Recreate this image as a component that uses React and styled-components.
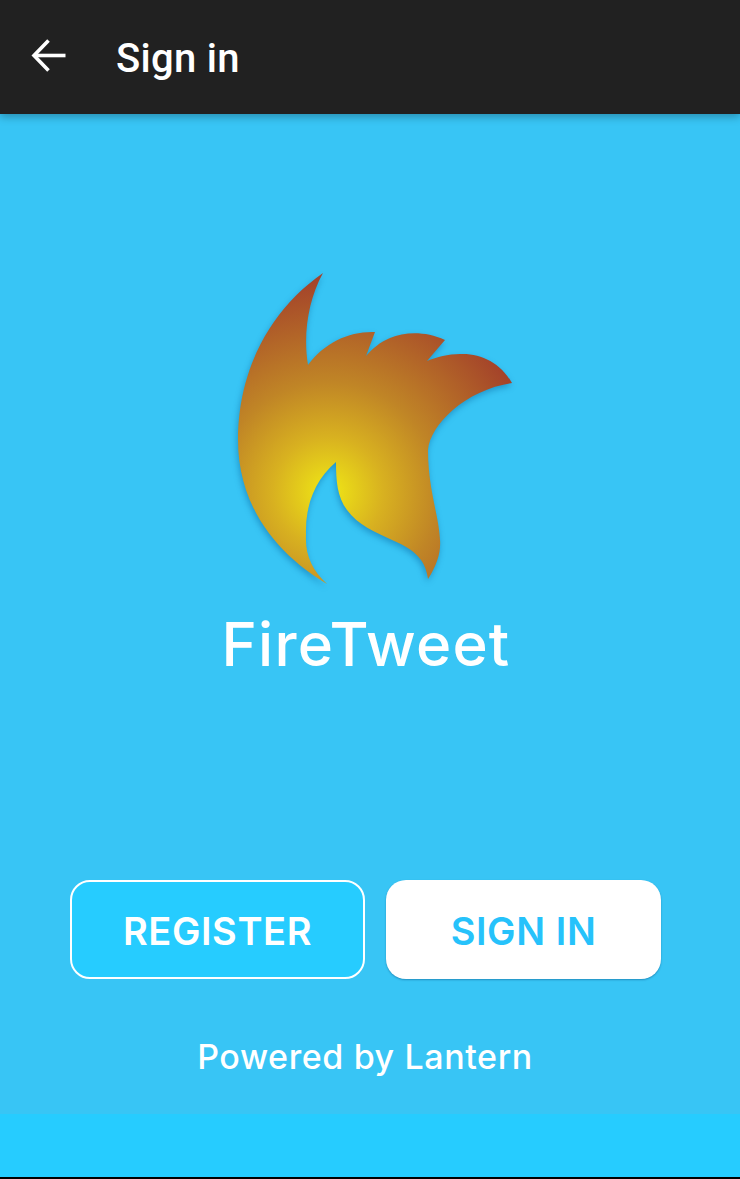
import React from 'react'
import styled, { createGlobalStyle } from 'styled-components'

const GlobalStyle = createGlobalStyle`
  html, body {
    margin: 0;
    padding: 0;
    background: #000;
  }
`

const Page = styled.div`
  width: 740px;
  height: 1179px;
  display: flex;
  flex-direction: column;
  overflow: hidden;
  font-family: "Inter", "Liberation Sans", sans-serif;
  color: #fff;
`

const AppBar = styled.header`
  position: relative;
  z-index: 1;
  flex: 0 0 114px;
  display: flex;
  align-items: center;
  background: #212121;
  box-shadow: 0 3px 8px rgba(0, 0, 0, 0.28);
`

const BackButton = styled.button`
  display: flex;
  width: 116px;
  padding: 0 0 0 28px;
  border: 0;
  background: none;
  color: #fff;
`

const BarTitle = styled.h1`
  margin: 3px 0 0;
  font-family: "Roboto", sans-serif;
  font-size: 40px;
  font-weight: 500;
  line-height: 1;
  letter-spacing: 0.3px;
`

const Main = styled.main`
  flex: 1;
  display: flex;
  flex-direction: column;
  align-items: center;
  padding-right: 10px;
  background: #38c5f5;
`

const Logo = styled.svg`
  display: block;
  margin-top: 151px;
  margin-left: 20px;
  filter: drop-shadow(-1px 3px 3px rgba(0, 80, 140, 0.4));
`

const Brand = styled.div`
  margin-top: 13px;
  margin-left: 2px;
  font-size: 60px;
  font-weight: 500;
  line-height: 72px;
  letter-spacing: 1.2px;
`

const Actions = styled.div`
  display: flex;
  gap: 21px;
  margin-top: 200px;
  margin-left: 1px;
`

const ActionButton = styled.button`
  box-sizing: border-box;
  width: ${props => props.$width}px;
  height: 99px;
  padding: 3px 0 0;
  border: ${props => (props.$filled ? '0' : '2px solid #fff')};
  border-radius: 20px;
  background: ${props => (props.$filled ? '#fff' : '#26ccff')};
  color: ${props => (props.$filled ? '#26c2fb' : '#fff')};
  box-shadow: ${props => (props.$filled ? '0 1px 2px rgba(0, 60, 110, 0.4)' : 'none')};
  font-family: inherit;
  font-size: 38px;
  font-weight: 600;
  letter-spacing: 0.6px;
`

const Powered = styled.div`
  margin-top: 58px;
  font-size: 34px;
  font-weight: 500;
  line-height: 40px;
  letter-spacing: 0.6px;
`

const BottomStrip = styled.div`
  flex: 0 0 63px;
  background: #26ccff;
`

const BottomEdge = styled.div`
  flex: 0 0 2px;
  background: #000;
`

function BackArrow() {
  return (
    <svg width="40" height="40" viewBox="0 0 40 40" fill="none" stroke="#fff" strokeWidth="3.6">
      <path d="M37.5 18.5H7" />
      <path d="M20.5 3.5L6 18.5L20.5 33.5" />
    </svg>
  )
}

function FireLogo() {
  return (
    <Logo width="290" height="330" viewBox="230 265 290 330">
      <defs>
        <radialGradient id="flame" gradientUnits="userSpaceOnUse" cx="328" cy="492" r="212">
          <stop offset="0" stopColor="#f0e815" />
          <stop offset="0.26" stopColor="#d8b120" />
          <stop offset="0.52" stopColor="#c08526" />
          <stop offset="1" stopColor="#a4432a" />
        </radialGradient>
      </defs>
      <path
        fill="url(#flame)"
        d="M323 273 C270 310 238 370 238 440 C238 500 270 550 327 584
           C312 570 305 555 306 535 C305 505 315 480 336 462
           C336 480 337 497 347 510 C358 525 375 532 392 540
           C410 548 425 556 428 579 C437 565 441 552 440 540
           C439 515 428 490 428 450 C430 425 465 390 512 383
           C500 362 480 353 460 354 C448 354 437 357 427 361
           L445 340 C425 331 405 332 390 338 C380 342 372 349 366 356
           L375 332 C350 331 325 342 308 365 C303 335 308 300 323 273 Z"
      />
    </Logo>
  )
}

export default function App() {
  return (
    <Page>
      <GlobalStyle />
      <AppBar>
        <BackButton aria-label="Back">
          <BackArrow />
        </BackButton>
        <BarTitle>Sign in</BarTitle>
      </AppBar>
      <Main>
        <FireLogo />
        <Brand>FireTweet</Brand>
        <Actions>
          <ActionButton $width={295}>REGISTER</ActionButton>
          <ActionButton $width={275} $filled>SIGN IN</ActionButton>
        </Actions>
        <Powered>Powered by Lantern</Powered>
      </Main>
      <BottomStrip />
      <BottomEdge />
    </Page>
  )
}
